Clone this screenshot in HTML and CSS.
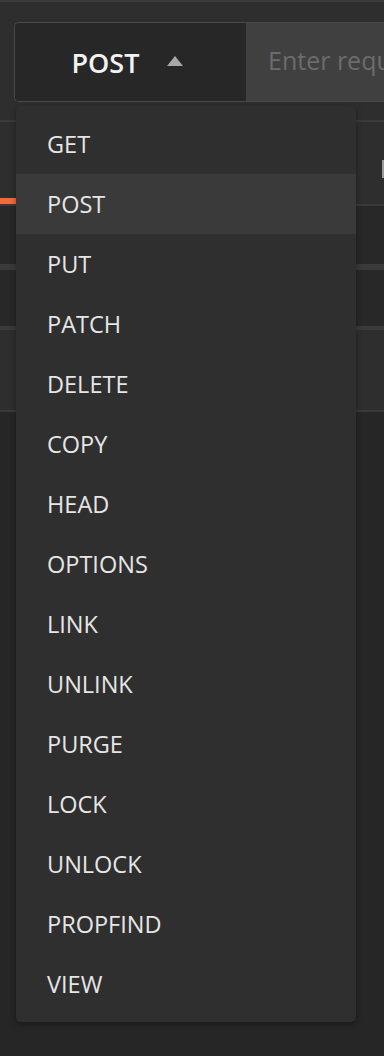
FILE: index.html
```html
<!DOCTYPE html>
<html lang="en">
<head>
    <meta charset="UTF-8">
    <meta name="viewport" content="width=device-width, initial-scale=1.0">
    <title>Request</title>
    <link rel="stylesheet" href="styles.css">
</head>
<body>
    <div class="topline"></div>
    <div class="request-bar">
        <div class="url-group">
            <button class="method-btn">POST <span class="caret"></span></button>
            <div class="url-input">Enter request URL</div>
        </div>
    </div>

    <!-- content behind the open menu -->
    <div class="tabs-row"><span class="tab-mark"></span></div>
    <div class="sub-row first"></div>
    <div class="sub-row second"></div>
    <div class="sub-row third"></div>
    <div class="rest"></div>

    <ul class="method-menu">
        <li>GET</li>
        <li class="active">POST</li>
        <li>PUT</li>
        <li>PATCH</li>
        <li>DELETE</li>
        <li>COPY</li>
        <li>HEAD</li>
        <li>OPTIONS</li>
        <li>LINK</li>
        <li>UNLINK</li>
        <li>PURGE</li>
        <li>LOCK</li>
        <li>UNLOCK</li>
        <li>PROPFIND</li>
        <li>VIEW</li>
    </ul>
</body>
</html>
```

FILE: styles.css
```css
html {
    overflow: hidden;
}

body {
    font-family: "Open Sans", "Liberation Sans", sans-serif;
    background-color: #262626;
    margin: 0;
    padding: 0;
    width: 384px;
    height: 1056px;
    overflow: hidden;
    position: relative;
}

.topline {
    height: 2px;
    background-color: #3b3b3b;
}

.request-bar {
    background-color: #2e2e2e;
    padding: 20px 0 18px 14px;
}

.url-group {
    display: flex;
    height: 78px;
    border: 1px solid #4a4a4a;
    border-right: none;
    border-radius: 5px 0 0 5px;
    overflow: hidden;
}

.method-btn {
    flex: none;
    width: 231px;
    background-color: #272727;
    border: none;
    color: #f2f2f2;
    font-family: inherit;
    font-size: 27px;
    font-weight: 600;
    display: flex;
    align-items: center;
    justify-content: center;
    gap: 28px;
    padding: 0 6px 0 0;
}

.caret {
    width: 0;
    height: 0;
    border-left: 8px solid transparent;
    border-right: 8px solid transparent;
    border-bottom: 10px solid #a8a8a8;
    margin-top: -3px;
}

.url-input {
    flex: 1;
    min-width: 0;
    background-color: #404040;
    color: #6c6c6c;
    font-size: 25px;
    padding: 0 0 4px 22px;
    display: flex;
    align-items: center;
    white-space: nowrap;
    overflow: hidden;
}

.tabs-row {
    height: 82px;
    border-top: 2px solid #3a3a3a;
    background-color: #2e2e2e;
    position: relative;
}

.tabs-row::after {
    content: "";
    position: absolute;
    left: 0;
    bottom: 0;
    width: 16px;
    height: 6px;
    background-color: #f26b3a;
}

.tab-mark {
    position: absolute;
    right: 0;
    top: 38px;
    width: 2px;
    height: 18px;
    background-color: #9a9a9a;
}

.sub-row {
    background-color: #282828;
    border-top: 2px solid #3a3a3a;
}

.sub-row.first {
    height: 58px;
}

.sub-row.second {
    height: 56px;
    border-top-width: 6px;
}

.sub-row.third {
    height: 80px;
    background-color: #2e2e2e;
    border-top-width: 4px;
    border-bottom: 2px solid #3a3a3a;
}

.rest {
    height: 644px;
    background-color: #262626;
}

.method-menu {
    position: absolute;
    top: 106px;
    left: 16px;
    width: 340px;
    margin: 0;
    padding: 8px 0;
    list-style: none;
    background-color: #2f2f2f;
    border-radius: 5px;
    box-shadow: 0 2px 6px rgba(0, 0, 0, 0.35);
}

.method-menu li {
    height: 60px;
    line-height: 60px;
    padding-left: 31px;
    color: #e6e6e6;
    font-size: 23.5px;
}

.method-menu li.active {
    background-color: #3a3a3a;
}
```
